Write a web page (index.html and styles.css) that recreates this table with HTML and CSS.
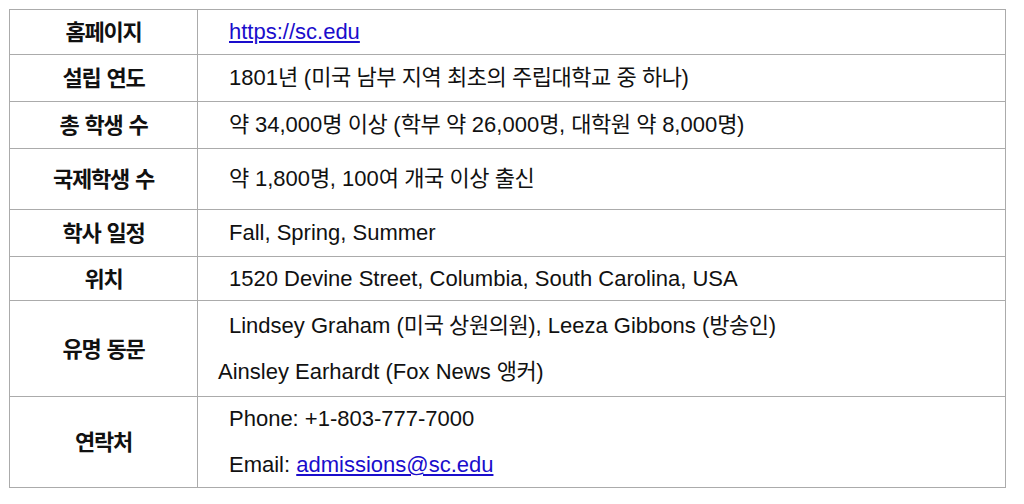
FILE: index.html
```html
<!DOCTYPE html>
<html lang="ko">
<head>
<meta charset="utf-8">
<title>University of South Carolina</title>
<link rel="stylesheet" href="styles.css">
</head>
<body>
<table class="info">
  <colgroup><col class="col-label"><col class="col-value"></colgroup>
  <tr class="r45">
    <th>홈페이지</th>
    <td><p class="ind"><a href="https://sc.edu">https://sc.edu</a></p></td>
  </tr>
  <tr class="r47">
    <th>설립 연도</th>
    <td><p class="ind">1801<span class="ko">년</span> (<span class="ko">미국 남부 지역 최초의 주립대학교 중 하나</span>)</p></td>
  </tr>
  <tr class="r47">
    <th>총 학생 수</th>
    <td><p class="ind"><span class="ko">약</span> 34,000<span class="ko">명 이상</span> (<span class="ko">학부 약</span> 26,000<span class="ko">명</span>, <span class="ko">대학원 약</span> 8,000<span class="ko">명</span>)</p></td>
  </tr>
  <tr class="r61">
    <th>국제학생 수</th>
    <td><p class="ind"><span class="ko">약</span> 1,800<span class="ko">명</span>, 100<span class="ko">여 개국 이상 출신</span></p></td>
  </tr>
  <tr class="r47">
    <th>학사 일정</th>
    <td><p class="ind">Fall, Spring, Summer</p></td>
  </tr>
  <tr class="r44">
    <th>위치</th>
    <td><p class="ind">1520 Devine Street, Columbia, South Carolina, USA</p></td>
  </tr>
  <tr class="r96">
    <th>유명 동문</th>
    <td>
      <p class="ind">Lindsey Graham (<span class="ko">미국 상원의원</span>), Leeza Gibbons (<span class="ko">방송인</span>)</p>
      <p class="gap">Ainsley Earhardt (Fox News <span class="ko">앵커</span>)</p>
    </td>
  </tr>
  <tr class="r91">
    <th>연락처</th>
    <td>
      <p class="ind">Phone: +1-803-777-7000</p>
      <p class="ind gap">Email: <a href="mailto:admissions@sc.edu">admissions@sc.edu</a></p>
    </td>
  </tr>
</table>
</body>
</html>
```

FILE: styles.css
```css
html, body {
  margin: 0;
  padding: 0;
  background: #ffffff;
}

body {
  padding: 9px 0 0 9px;
  font-family: "Liberation Sans", "Noto Sans CJK KR", sans-serif;
  color: #111111;
}

.info {
  border-collapse: collapse;
  width: 997px;
  table-layout: fixed;
  font-size: 22px;
}

.col-label {
  width: 188px;
}

.info th,
.info td {
  border: 1px solid #ababab;
  padding: 0;
  vertical-align: middle;
}

.info th {
  font-family: "Noto Sans CJK KR", "Liberation Sans", sans-serif;
  font-weight: 700;
  font-size: 22px;
  line-height: 26px;
  text-align: center;
  letter-spacing: -1.2px;
  word-spacing: 1px;
  padding-bottom: 4px;
}

.info td {
  padding-left: 20px;
  text-align: left;
}

.info p {
  margin: 0;
  line-height: 26px;
}

.info p.ind {
  padding-left: 11px;
}

.info p.gap {
  margin-top: 20px;
}

.ko {
  letter-spacing: -0.45px;
}

.info a {
  color: #1a0dcc;
  text-decoration: underline;
}

.r44 { height: 44px; }
.r45 { height: 45px; }
.r47 { height: 47px; }
.r61 { height: 61px; }
.r91 { height: 91px; }
.r96 { height: 96px; }
```
